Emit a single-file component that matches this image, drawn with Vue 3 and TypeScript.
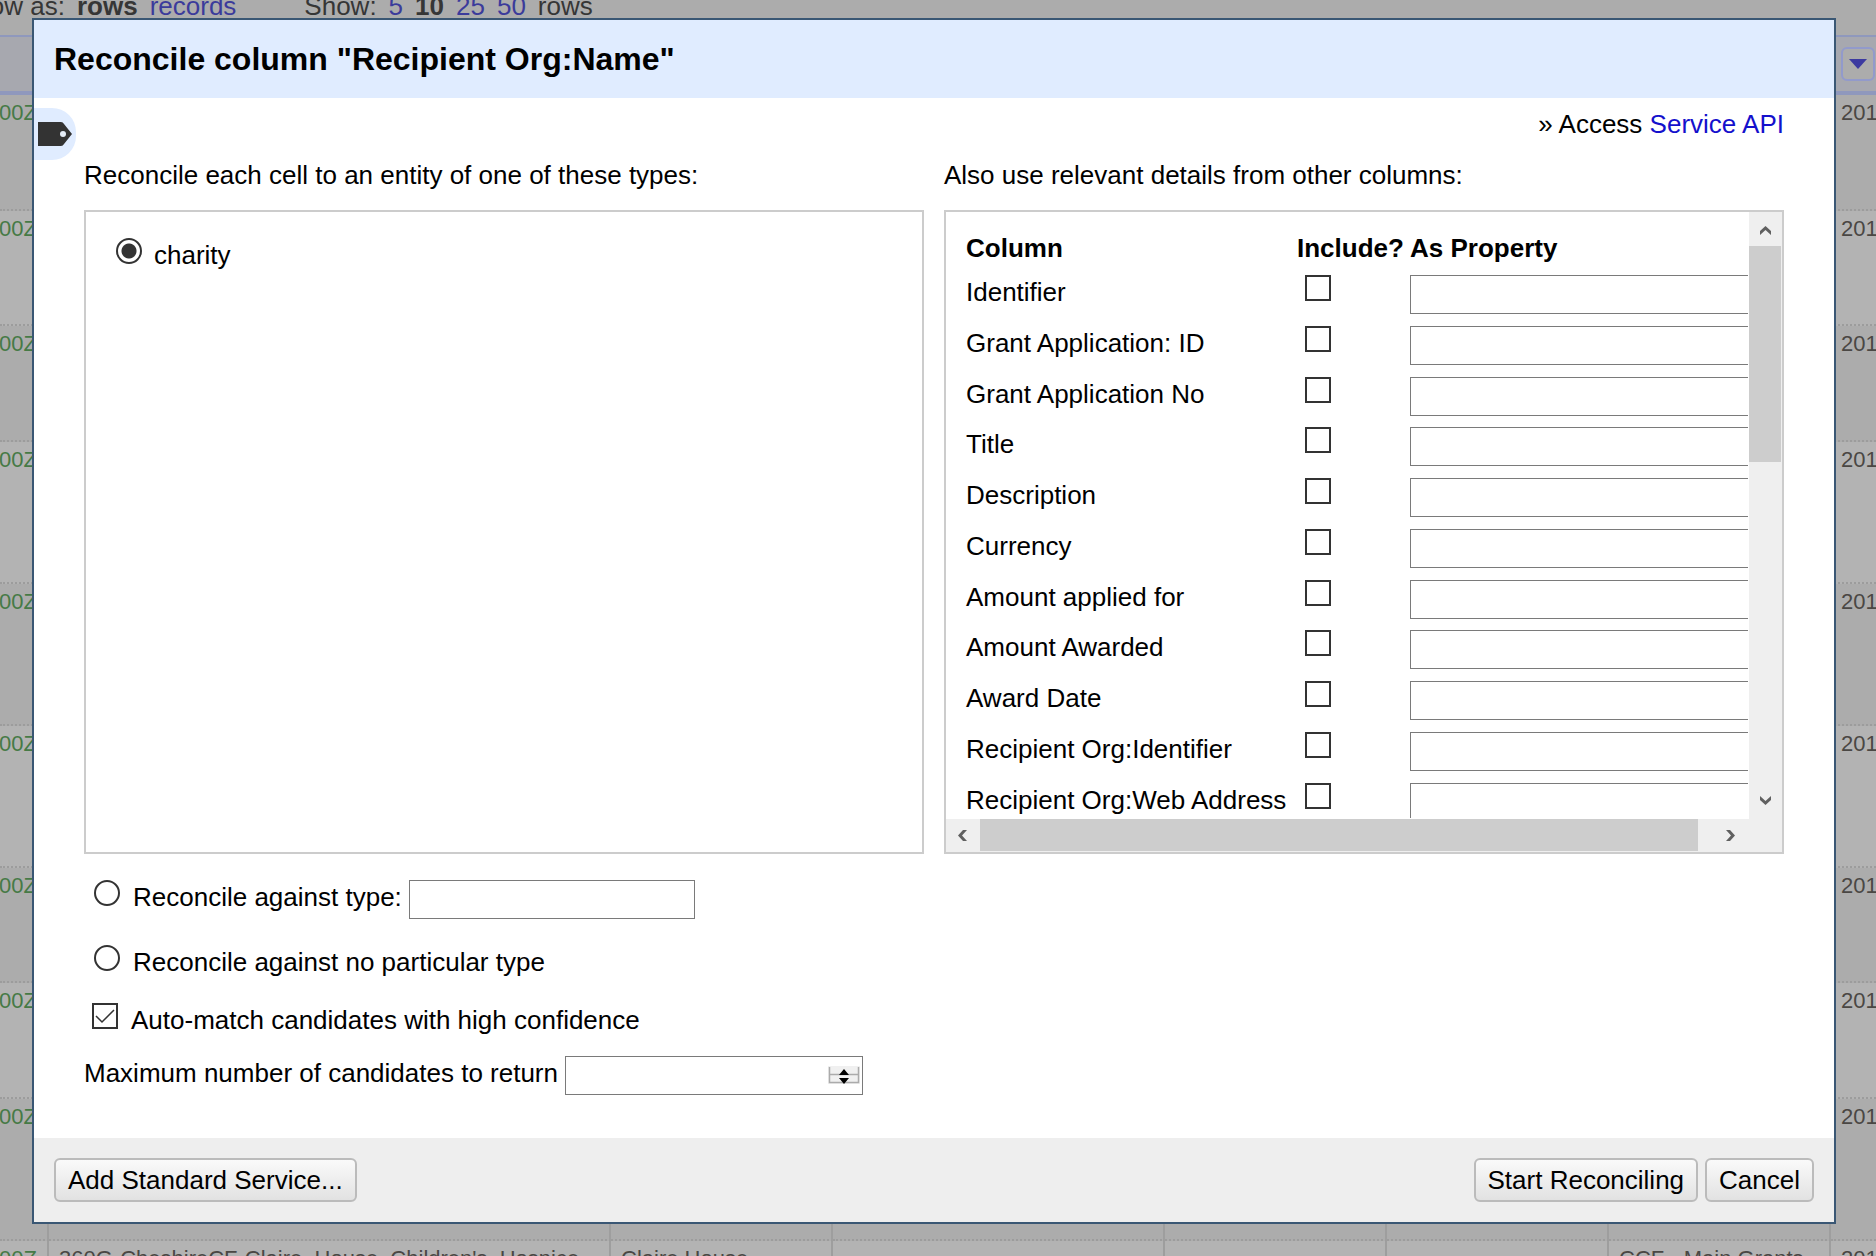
<script setup lang="ts">
import { ref } from 'vue'

interface GridRow {
  tall: boolean
  cells: string[]
}

interface DetailColumn {
  name: string
  include: boolean
  property: string
}

const empty = (tall: boolean): GridRow => ({ tall, cells: ['00Z', '', '', '', '', '', '', '201'] })

const gridRows: GridRow[] = [
  empty(false),
  empty(false),
  empty(false),
  empty(true),
  empty(true),
  empty(true),
  empty(false),
  empty(false),
  empty(true),
  {
    tall: true,
    cells: ['00Z', "360G-CheshireCF-Claire_House_Children's_Hospice", 'Claire House', '', '', '', 'CCF - Main Grants', '201'],
  },
]

const columns = ref<DetailColumn[]>(
  [
    'Identifier',
    'Grant Application: ID',
    'Grant Application No',
    'Title',
    'Description',
    'Currency',
    'Amount applied for',
    'Amount Awarded',
    'Award Date',
    'Recipient Org:Identifier',
    'Recipient Org:Web Address',
  ].map((name) => ({ name, include: false, property: '' })),
)

const typeChoice = ref('charity')
const typeName = ref('')
const autoMatch = ref(true)
const limit = ref('')
</script>

<template>
  <div class="page">
    <div class="backdrop">
      <div class="toolbar">
        <span>Show as:</span>
        <b>rows</b>
        <a href="#records">records</a>
        <span class="sizes">Show:</span>
        <a href="#5">5</a>
        <b>10</b>
        <a href="#25">25</a>
        <a href="#50">50</a>
        <span>rows</span>
      </div>
      <table class="grid">
        <colgroup>
          <col class="w-date" />
          <col class="w-id" />
          <col class="w-std" />
          <col class="w-wide" />
          <col class="w-std" />
          <col class="w-std" />
          <col class="w-std" />
          <col />
        </colgroup>
        <thead>
          <tr>
            <th v-for="n in 7" :key="n"></th>
            <th>
              <button class="menu" type="button" aria-label="Column menu">
                <svg width="18" height="10" viewBox="0 0 18 10"><path d="M0 0H18L9 10Z" fill="#3c3aa0" /></svg>
              </button>
            </th>
          </tr>
        </thead>
        <tbody>
          <tr v-for="(row, r) in gridRows" :key="r" :class="{ tall: row.tall }">
            <td v-for="(cell, c) in row.cells" :key="c">{{ cell }}</td>
          </tr>
        </tbody>
      </table>
    </div>

    <section class="dialog" role="dialog" aria-labelledby="dialog-title">
      <header class="head">
        <h1 id="dialog-title">Reconcile column "Recipient Org:Name"</h1>
      </header>

      <div class="body">
        <button class="tab" type="button" aria-label="Service">
          <svg width="34" height="24" viewBox="0 0 34 24">
            <path d="M0 0H23Q25 0 26 2L34 12L26 22Q25 24 23 24H0Z" fill="#333" />
            <circle cx="25" cy="12" r="3" fill="#e4ecf6" />
          </svg>
        </button>

        <p class="access">» Access <a href="#service-api">Service API</a></p>

        <div class="panels">
          <div class="side">
            <h2>Reconcile each cell to an entity of one of these types:</h2>
            <div class="panel types">
              <label class="choice">
                <input v-model="typeChoice" type="radio" name="type" value="charity" />
                <span>charity</span>
              </label>
            </div>
          </div>

          <div class="side">
            <h2>Also use relevant details from other columns:</h2>
            <div class="panel scroller">
              <div class="view">
                <table class="details">
                  <thead>
                    <tr>
                      <th class="c-name">Column</th>
                      <th class="c-include">Include?</th>
                      <th class="c-prop">As Property</th>
                    </tr>
                  </thead>
                  <tbody>
                    <tr v-for="(col, i) in columns" :key="col.name">
                      <td><label :for="`include-${i}`">{{ col.name }}</label></td>
                      <td class="tick"><input :id="`include-${i}`" v-model="col.include" type="checkbox" /></td>
                      <td><input v-model="col.property" type="text" :aria-label="`${col.name} property`" /></td>
                    </tr>
                  </tbody>
                </table>
              </div>
              <div class="bar vertical">
                <svg class="arrow" width="11" height="9" viewBox="0 0 11 9"><path d="M0 9V5L5.500 0L11 5V9L5.500 4Z" fill="#606060" /></svg>
                <div class="track"><div class="thumb"></div></div>
                <svg class="arrow" width="11" height="9" viewBox="0 0 11 9"><path d="M0 0V4L5.500 9L11 4V0L5.500 5Z" fill="#606060" /></svg>
              </div>
              <div class="bar horizontal">
                <svg class="arrow" width="9" height="11" viewBox="0 0 9 11"><path d="M9 0H5L0 5.500L5 11H9L4 5.500Z" fill="#606060" /></svg>
                <div class="track"><div class="thumb"></div></div>
                <svg class="arrow" width="9" height="11" viewBox="0 0 9 11"><path d="M0 0H4L9 5.500L4 11H0L5 5.500Z" fill="#606060" /></svg>
              </div>
              <div class="corner"></div>
            </div>
          </div>
        </div>

        <div class="line indent">
          <label class="choice">
            <input v-model="typeChoice" type="radio" name="type" value="named" />
            <span>Reconcile against type:</span>
          </label>
          <input v-model="typeName" class="type-name" type="text" aria-label="Type" />
        </div>
        <div class="line indent">
          <label class="choice">
            <input v-model="typeChoice" type="radio" name="type" value="none" />
            <span>Reconcile against no particular type</span>
          </label>
        </div>
        <div class="line auto">
          <label class="choice">
            <input v-model="autoMatch" type="checkbox" />
            <span>Auto-match candidates with high confidence</span>
          </label>
        </div>
        <div class="line limit">
          <label for="limit">Maximum number of candidates to return</label>
          <div class="number">
            <input id="limit" v-model="limit" type="number" />
            <svg class="spinner" width="32" height="18" viewBox="0 0 32 18">
              <rect width="32" height="18" fill="#f0f0f0" />
              <path d="M1.500 1V16.500H30.500V1M1.500 8.500H30.500" fill="none" stroke="#ababab" stroke-width="1.500" />
              <path d="M11 9L16 3L21 9ZM11 12H21L16 18Z" fill="#000" />
            </svg>
          </div>
        </div>
      </div>

      <footer class="foot">
        <button class="btn" type="button">Add Standard Service...</button>
        <div class="actions">
          <button class="btn" type="button">Start Reconciling</button>
          <button class="btn" type="button">Cancel</button>
        </div>
      </footer>
    </section>
  </div>
</template>

<style>
body {
  background: #acacac;
}
</style>

<style scoped>
.page {
  position: relative;
  overflow: hidden;
  box-sizing: border-box;
  min-height: 100vh;
  padding: 18px 40px 32px 32px;
  display: flex;
  font: 26px/30px "Liberation Sans", Arial, sans-serif;
  color: #000;
}
.page * {
  box-sizing: border-box;
}
a {
  color: #1410cc;
  text-decoration: none;
}
table {
  border-collapse: separate;
  border-spacing: 0;
  table-layout: fixed;
}

/* Data grid behind the dialog */
.backdrop {
  position: absolute;
  inset: 0;
  overflow: hidden;
  background: #acacac;
  color: #363636;
}
.toolbar {
  display: flex;
  gap: 12px;
  height: 35px;
  margin: -9px 0 9px -42px;
  white-space: nowrap;
}
.toolbar a {
  color: #3b3b9b;
}
.sizes {
  margin-left: 56px;
}
.grid {
  width: 100%;
  font-size: 22px;
  line-height: 26px;
}
.w-date { width: 49px; }
.w-id { width: 562px; }
.w-std { width: 222px; }
.w-wide { width: 332px; }
.grid th {
  height: 60px;
  padding: 10px 0 10px 10px;
  background: #a7a8af;
  border-top: 2px solid #8f98bd;
  border-bottom: 4px solid #8f98bd;
  text-align: left;
}
.menu {
  display: flex;
  align-items: center;
  justify-content: center;
  width: 34px;
  height: 34px;
  padding: 0;
  border: 2px solid #929acb;
  border-radius: 6px;
  background: #acacac;
}
.grid td {
  height: 116px;
  padding: 5px 0 0 10px;
  vertical-align: top;
  white-space: nowrap;
  color: #4a4744;
  background: #acacac;
  border-right: 2px solid #9e9e9e;
  border-bottom: 2px dotted #9c9c9c;
}
.grid tr:nth-child(5n + 2) td { height: 115px; }
.grid tr.tall td { height: 142px; }
.grid tr:nth-child(even) td { background: #b3b3b3; }
.grid td:first-child {
  padding-left: 0;
  padding-right: 12px;
  color: #467a46;
  direction: rtl;
}
.grid td:last-child { border-right: 0; }

/* Dialog */
.dialog {
  position: relative;
  flex: 1;
  display: flex;
  flex-direction: column;
  border: 2px solid #3a5774;
  background: #fff;
}
.head {
  padding: 22px 20px;
  background: #e0ecff;
}
h1 {
  margin: 0;
  font-size: 32px;
  line-height: 34px;
}
.body {
  position: relative;
  flex: 1;
  padding: 11px 50px 43px;
}
.tab {
  position: absolute;
  left: 0;
  top: 10px;
  display: flex;
  align-items: center;
  width: 42px;
  height: 52px;
  padding: 0 4px;
  border: 0;
  border-radius: 0 24px 24px 0;
  background: #e0ecff;
}
.access {
  margin: 0 0 21px;
  text-align: right;
}
.panels {
  display: flex;
  gap: 20px;
}
.side {
  flex: 1;
  min-width: 0;
}
h2 {
  margin: 0 0 20px;
  font-size: 26px;
  line-height: 30px;
  font-weight: normal;
}
.panel {
  height: 644px;
  border: 2px solid #ccc;
}
.types {
  padding: 26px 30px;
}
.choice {
  display: inline-flex;
  align-items: flex-start;
  gap: 12px;
}
.line .choice {
  gap: 13px;
}
.choice span,
.limit label,
.details label {
  padding-top: 2px;
}
.details label {
  display: block;
  white-space: nowrap;
}
input {
  margin: 0;
  font: inherit;
  border-radius: 0;
  background-color: #fff;
}
input[type='radio'],
input[type='checkbox'] {
  appearance: none;
  display: block;
  flex: none;
  width: 26px;
  height: 26px;
  border: 2px solid #333;
}
input[type='radio'] {
  border-radius: 50%;
}
input[type='radio']:checked {
  background: radial-gradient(circle, #333 0 7px, #fff 8px);
}
input[type='checkbox']:checked {
  background: url("data:image/svg+xml,%3Csvg xmlns='http://www.w3.org/2000/svg' width='22' height='22'%3E%3Cpath d='M2 11L8 17L20 5' fill='none' stroke='%23333' stroke-width='1.500'/%3E%3C/svg%3E") center no-repeat;
}
input[type='text'],
input[type='number'] {
  appearance: none;
  display: block;
  height: 39px;
  padding: 2px 4px;
  border: 1px solid #7a7a7a;
}
input[type='number'] {
  appearance: textfield;
  width: 298px;
  padding-right: 36px;
}
.type-name {
  width: 286px;
}

.scroller {
  display: grid;
  grid-template: minmax(0, 1fr) 33px / minmax(0, 1fr) 33px;
}
.view {
  overflow: hidden;
  margin: 0 1px 1px 0;
  padding-left: 20px;
}
.details {
  width: 800px;
}
.c-name { width: 331px; }
.c-include { width: 113px; }
.details th {
  height: 63px;
  padding: 21px 0 0;
  text-align: left;
  vertical-align: top;
}
.details td {
  height: 51px;
  padding: 0;
  vertical-align: top;
}
.details tr:nth-child(4n + 3) td {
  height: 50px;
}
.details .tick {
  padding-left: 8px;
}
.details input[type='text'] {
  width: 100%;
}
.bar {
  display: flex;
  align-items: center;
  background: #efefef;
}
.vertical {
  flex-direction: column;
  padding: 14px 0;
}
.horizontal {
  padding: 0 14px 0 12px;
}
.arrow {
  flex: none;
}
.track {
  flex: 1;
  align-self: stretch;
}
.vertical .track {
  margin: 11px 0 10px;
}
.horizontal .track {
  margin: 0 28px 0 13px;
}
.thumb {
  background: #cdcdcd;
}
.vertical .thumb {
  width: 32px;
  height: 40%;
}
.horizontal .thumb {
  height: 32px;
}
.corner {
  background: #efefef;
}

.line {
  display: flex;
  align-items: flex-start;
  gap: 7px;
  margin-top: 26px;
}
.indent {
  padding-left: 10px;
}
.auto {
  padding-left: 8px;
}
.limit {
  margin-top: 21px;
}
.number {
  position: relative;
}
.spinner {
  position: absolute;
  right: 3px;
  top: 10px;
  pointer-events: none;
}

.foot {
  display: flex;
  justify-content: space-between;
  padding: 20px;
  background: #eee;
}
.actions {
  display: flex;
  gap: 7px;
}
.btn {
  height: 44px;
  padding: 0 12px;
  border: 2px solid #bbb;
  border-radius: 6px;
  background: linear-gradient(#fafafa, #e2e2e2);
  font: inherit;
  color: #000;
}
</style>
